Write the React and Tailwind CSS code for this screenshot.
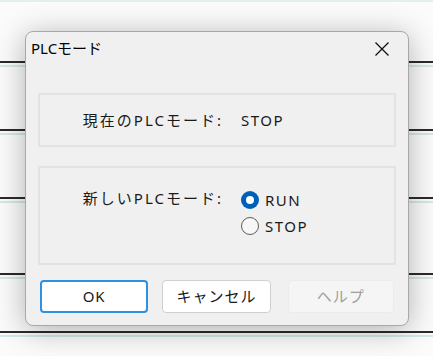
const font = { fontFamily: '"Segoe UI", "Noto Sans", "Noto Sans CJK JP", sans-serif' };

const lines = [65, 68, 68, 76, 58];

const Radio = ({ checked, label }) => (
  <div className="flex items-center gap-[6px] h-[26px]">
    {checked ? (
      <span className="w-[18px] h-[18px] rounded-full bg-[#005fb8] flex items-center justify-center">
        <span className="w-[8px] h-[8px] rounded-full bg-white" />
      </span>
    ) : (
      <span className="w-[18px] h-[18px] rounded-full border border-[#5d5d5d] bg-[#f7f7f7]" />
    )}
    <span className="text-[15px] tracking-[1.5px] text-[#1a1a1a]">{label}</span>
  </div>
);

export default function App() {
  return (
    <div className="relative w-[433px] h-[356px] overflow-hidden bg-[#fbfbfb]" style={font}>
      <div className="flex flex-col">
        <div className="h-[2px] bg-[#dff0ef]" />
        {lines.map((h, i) => (
          <div key={i} className="flex flex-col" style={{ height: h }}>
            <div className="flex-1" />
            <div className="h-[2px] bg-[#2b2b2b]" />
            <div className="h-[2px]" />
            <div className="h-[2px] bg-[#d3e9e8]" />
          </div>
        ))}
      </div>

      <div className="absolute left-[25px] top-[31px] w-[384px] h-[295px] rounded-[8px] border border-[#a8a8a8] bg-[#f0f0f0] shadow-[0_4px_30px_rgba(0,0,0,0.3)] flex flex-col">
        <div className="h-[33px] flex items-center justify-between pl-[5px] pr-[14px]">
          <span className="text-[15px] text-black">PLCモード</span>
          <svg width="16" height="16" viewBox="0 0 16 16" className="mr-[4px]">
            <path d="M1.5 1.5 L14.5 14.5 M14.5 1.5 L1.5 14.5" stroke="#111" strokeWidth="1.3" />
          </svg>
        </div>

        <div className="flex flex-col px-[12px] pt-[28px]">
          <div className="h-[54px] border-2 border-[#e3e3e3] flex items-center">
            <span className="w-[183px] text-right text-[15px] tracking-[2px] text-[#1a1a1a]">現在のPLCモード:</span>
            <span className="ml-[18px] text-[15px] tracking-[1.5px] text-[#1a1a1a]">STOP</span>
          </div>

          <div className="mt-[19px] h-[99px] border-2 border-[#e3e3e3] flex items-start pt-[18px]">
            <span className="w-[183px] text-right text-[15px] tracking-[2px] text-[#1a1a1a] leading-[24px]">新しいPLCモード:</span>
            <div className="ml-[18px] flex flex-col mt-[1px]">
              <Radio checked label="RUN" />
              <Radio label="STOP" />
            </div>
          </div>
        </div>

        <div className="flex items-center px-[14px] mt-[15px] gap-0">
          <button className="w-[109px] h-[33px] rounded-[4px] border-2 border-[#2f8fe0] bg-white text-[15px] tracking-[1px] text-[#1a1a1a]">
            OK
          </button>
          <button className="ml-[14px] w-[109px] h-[33px] rounded-[4px] border border-[#cfcfcf] bg-white text-[15px] tracking-[1px] text-[#1a1a1a]">
            キャンセル
          </button>
          <button className="ml-[17px] w-[107px] h-[33px] rounded-[4px] border border-[#ececec] bg-[#f5f5f5] text-[15px] tracking-[1px] text-[#a0a0a0]">
            ヘルプ
          </button>
        </div>
      </div>
    </div>
  );
}
